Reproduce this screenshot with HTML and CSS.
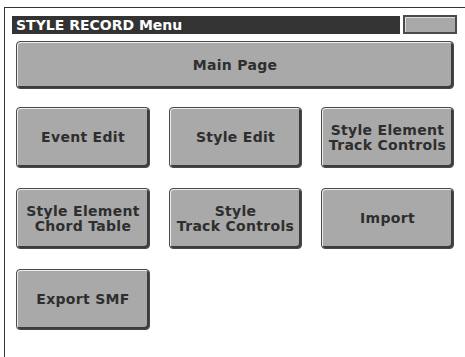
FILE: index.html
```html
<!DOCTYPE html>
<html>
<head>
<meta charset="utf-8">
<link rel="stylesheet" href="styles.css">
</head>
<body>
<div class="screen">
  <div class="titlerow">
    <div class="title">STYLE RECORD Menu</div>
    <div class="slot"></div>
  </div>
  <div class="btn main">Main Page</div>
  <div class="grid">
    <div class="btn">Event Edit</div>
    <div class="btn">Style Edit</div>
    <div class="btn">Style Element<br>Track Controls</div>
    <div class="btn">Style Element<br>Chord Table</div>
    <div class="btn">Style<br>Track Controls</div>
    <div class="btn">Import</div>
    <div class="btn">Export SMF</div>
  </div>
</div>
</body>
</html>
```

FILE: styles.css
```css
html, body {
  margin: 0;
  padding: 0;
  background: #ffffff;
  width: 465px;
  height: 357px;
  overflow: hidden;
}
body {
  font-family: "DejaVu Sans", "Liberation Sans", sans-serif;
}
.screen {
  margin: 7px 0 0 4px;
  width: 470px;
  height: 346px;
  border-top: 1px solid #333;
  border-left: 1px solid #333;
  border-bottom: 1px solid #333;
  padding: 8px 0 0 7px;
  box-sizing: content-box;
}
.titlerow {
  display: flex;
  align-items: flex-start;
  gap: 3px;
  height: 19px;
}
.title {
  width: 384px;
  height: 18px;
  background: #333333;
  color: #ffffff;
  font-weight: bold;
  font-size: 14px;
  line-height: 18px;
  padding-left: 4px;
  white-space: nowrap;
}
.slot {
  width: 50px;
  height: 15px;
  background: #a8a8a8;
  border: 2px solid #4a4a4a;
  box-shadow: inset 1px 1px 0 #dcdcdc;
  margin-top: -1px;
}
.btn {
  background: #a9a9a9;
  border: 1px solid #4a4a4a;
  border-radius: 4px;
  box-shadow: inset 1px 1px 0 #ececec, inset -2px -2px 0 #3c3c3c;
  color: #2e2e2e;
  font-weight: bold;
  font-size: 14px;
  line-height: 15px;
  display: flex;
  align-items: center;
  justify-content: center;
  text-align: center;
  box-sizing: border-box;
  letter-spacing: 0.3px;
}
.main {
  width: 438px;
  height: 48px;
  margin: 6px 0 0 4px;
}
.grid {
  display: grid;
  grid-template-columns: 134px 133px 133px;
  grid-auto-rows: 61px;
  column-gap: 19px;
  row-gap: 20px;
  margin: 18px 0 0 4px;
}
```
